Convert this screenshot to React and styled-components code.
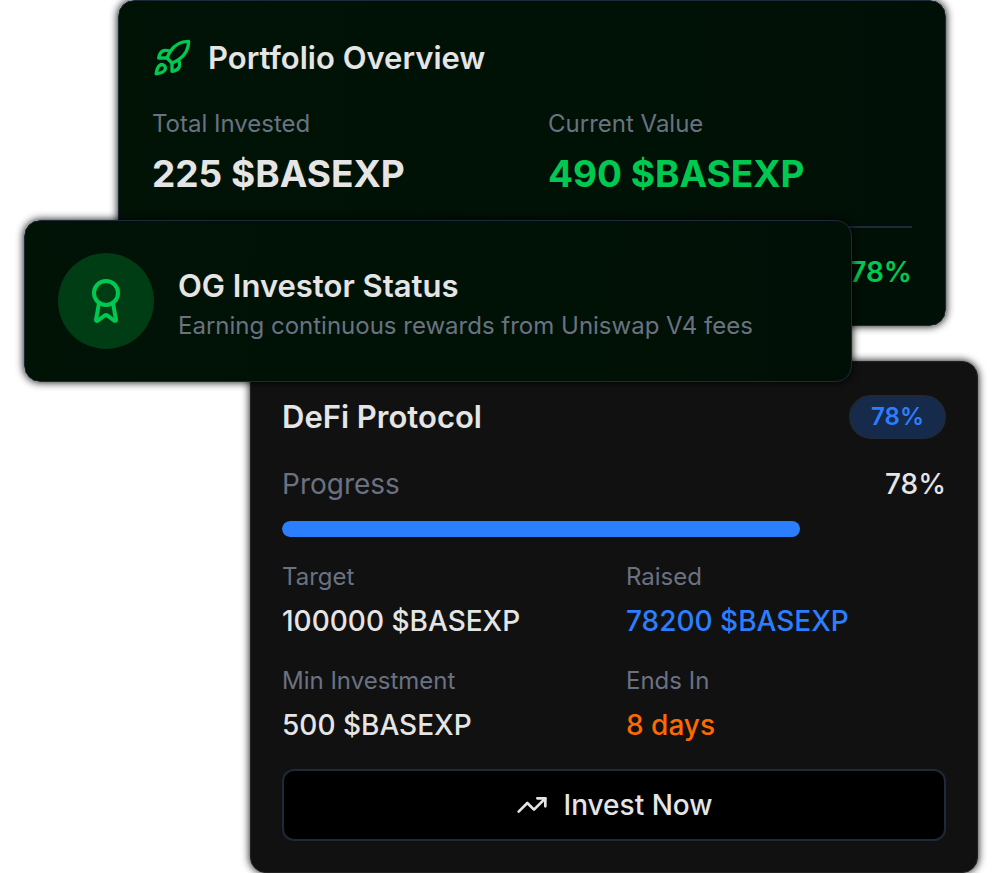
import React from 'react';
import styled, { createGlobalStyle } from 'styled-components';
import { Award, Rocket, TrendingUp } from 'lucide-react';

const colors = {
    text: '#e5e5e5',
    muted: '#6a7282',
    green: '#00c951',
    blue: '#2b7fff',
    orange: '#ff6900',
    line: '#1e2939',
};

const GlobalStyle = createGlobalStyle`
    * {
        box-sizing: border-box;
    }

    body {
        margin: 0;
        background: #ffffff;
        color: ${colors.text};
        font-family: Inter, sans-serif;
    }

    h2, p, dl, dt, dd {
        margin: 0;
    }
`;

const Page = styled.main`
    display: flex;
    flex-direction: column;
`;

const Card = styled.section`
    border: 1px solid ${colors.line};
    border-radius: 16px;
    box-shadow: 0 0 8px #000000;
`;

const GreenCard = styled(Card)`
    padding: 33px;
    background: linear-gradient(90deg, #001305, #001006);
`;

const PortfolioCard = styled(GreenCard)`
    margin-left: 118px;
    margin-right: 54px;
`;

// Sits on top of both neighbours
const StatusCard = styled(GreenCard)`
    z-index: 1;
    display: flex;
    align-items: center;
    gap: 24px;
    margin: -106px 148px -21px 24px;
    padding: 32px 33px;
`;

const ProtocolCard = styled(Card)`
    margin-left: 250px;
    margin-right: 22px;
    padding: 33px 31px 31px;
    border-color: #222222;
    background: #111111;
`;

const CardHeader = styled.header`
    display: flex;
    align-items: center;
    justify-content: ${({ $spread }) => $spread ? 'space-between' : 'flex-start'};
    gap: 16px;
    min-height: ${({ $spread }) => $spread ? 44 : 48}px;
`;

const Title = styled.h2`
    font-size: 31px;
    font-weight: 600;
    line-height: 44px;
`;

const Stats = styled.dl`
    display: grid;
    grid-template-columns: 1fr 1fr;
    gap: 24px ${({ $gap }) => $gap || 24}px;
    margin-top: 24px;
`;

const StatLabel = styled.dt`
    color: ${colors.muted};
    font-size: 24px;
    line-height: ${({ $large }) => $large ? 36 : 32}px;
`;

const StatValue = styled.dd`
    margin-top: 8px;
    color: ${({ $color }) => $color || colors.text};
    font-size: ${({ $large }) => $large ? 37 : 28}px;
    font-weight: ${({ $large }) => $large ? 700 : 500};
    line-height: ${({ $large }) => $large ? 48 : 40}px;
`;

const Growth = styled.p`
    margin-top: 28px;
    padding-top: 24px;
    border-top: 2px solid ${colors.line};
    color: ${colors.green};
    font-size: 28px;
    font-weight: 600;
    line-height: 40px;
    text-align: right;
`;

const AwardCircle = styled.div`
    display: flex;
    flex: none;
    align-items: center;
    justify-content: center;
    width: 96px;
    height: 96px;
    border-radius: 50%;
    background: #003d14;
    color: ${colors.green};
`;

const StatusCopy = styled.div`
    padding-top: 6px;
`;

const StatusText = styled.p`
    color: ${colors.muted};
    font-size: 24px;
    line-height: 36px;
`;

const Badge = styled.span`
    padding: 4px 20px;
    border: 2px solid ${colors.line};
    border-radius: 22px;
    background: #162a4c;
    color: ${colors.blue};
    font-size: 24px;
    font-weight: 600;
    line-height: 32px;
`;

const ProgressRow = styled.div`
    display: flex;
    justify-content: space-between;
    margin: 24px 0 16px;
    font-size: 28px;
    font-weight: 500;
    line-height: 42px;
`;

const ProgressLabel = styled.span`
    color: ${colors.muted};
    font-weight: 400;
`;

const ProgressTrack = styled.div`
    height: 16px;
    border-radius: 8px;
    overflow: hidden;
`;

const ProgressFill = styled.div`
    height: 100%;
    border-radius: 8px;
    background: ${colors.blue};
`;

const InvestButton = styled.button`
    display: flex;
    align-items: center;
    justify-content: center;
    gap: 16px;
    width: 100%;
    margin-top: 24px;
    padding: 14px;
    border: 2px solid ${colors.line};
    border-radius: 12px;
    background: #000000;
    color: ${colors.text};
    font-family: inherit;
    font-size: 28px;
    font-weight: 500;
    line-height: 40px;
    cursor: pointer;
`;

const Stat = ({ label, large, color, children }) => (
    <div>
        <StatLabel $large={large}>{label}</StatLabel>
        <StatValue $large={large} $color={color}>{children}</StatValue>
    </div>
)

const Progress = ({ value }) => (
    <>
        <ProgressRow>
            <ProgressLabel id="progress-label">Progress</ProgressLabel>
            <span>{value}%</span>
        </ProgressRow>
        <ProgressTrack role="progressbar" aria-labelledby="progress-label" aria-valuenow={value}>
            <ProgressFill style={{ width: `${value}%` }} />
        </ProgressTrack>
    </>
)

const App = () => (
    <Page>
        <GlobalStyle />

        <PortfolioCard>
            <CardHeader>
                <Rocket size={40} color={colors.green} />
                <Title>Portfolio Overview</Title>
            </CardHeader>
            <Stats $gap={32}>
                <Stat label="Total Invested" large>225 $BASEXP</Stat>
                <Stat label="Current Value" large color={colors.green}>490 $BASEXP</Stat>
            </Stats>
            <Growth>78%</Growth>
        </PortfolioCard>

        <StatusCard>
            <AwardCircle>
                <Award size={48} />
            </AwardCircle>
            <StatusCopy>
                <Title>OG Investor Status</Title>
                <StatusText>Earning continuous rewards from Uniswap V4 fees</StatusText>
            </StatusCopy>
        </StatusCard>

        <ProtocolCard>
            <CardHeader $spread>
                <Title>DeFi Protocol</Title>
                <Badge>78%</Badge>
            </CardHeader>
            <Progress value={78} />
            <Stats>
                <Stat label="Target">100000 $BASEXP</Stat>
                <Stat label="Raised" color={colors.blue}>78200 $BASEXP</Stat>
                <Stat label="Min Investment">500 $BASEXP</Stat>
                <Stat label="Ends In" color={colors.orange}>8 days</Stat>
            </Stats>
            <InvestButton type="button">
                <TrendingUp size={32} />
                Invest Now
            </InvestButton>
        </ProtocolCard>
    </Page>
)

export default App
